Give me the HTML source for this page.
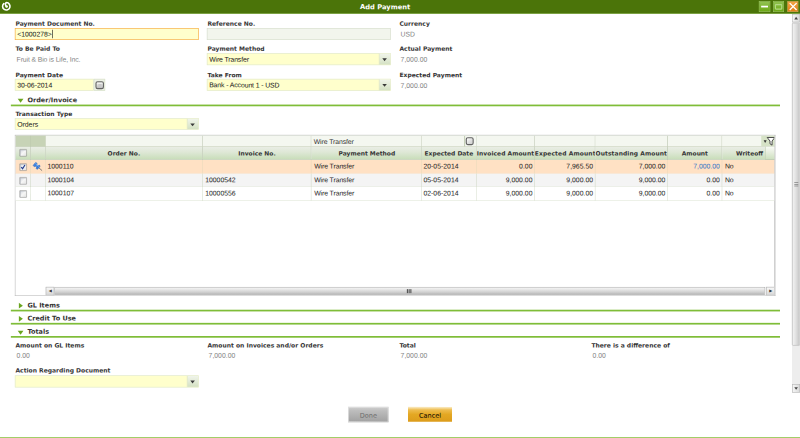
<!DOCTYPE html>
<html lang="en">
<head>
<meta charset="utf-8">
<title>Add Payment</title>
<style>
html,body{margin:0;padding:0;background:#fff;overflow:hidden;}
body{width:800px;height:438px;position:relative;}
#app{position:absolute;left:0;top:0;width:1400px;height:767px;transform:scale(0.5714286);transform-origin:0 0;background:#fff;font-family:"Liberation Sans",sans-serif;font-size:12px;color:#333;overflow:hidden;}
#app *{box-sizing:border-box;}
.abs{position:absolute;}
.titlebar{position:absolute;left:0;top:0;width:1400px;height:24.3px;background:#4b7409;border-bottom:1px solid #7aa63a;}
.title{position:absolute;left:0;top:4.9px;width:1348px;text-align:center;color:#fff;font:bold 11.75px "DejaVu Sans","Liberation Sans",sans-serif;line-height:15px;}
.lbl{position:absolute;margin-top:0.4px;font:bold 10.5px "DejaVu Sans","Liberation Sans",sans-serif;color:#333;line-height:14px;white-space:nowrap;}
.val{position:absolute;font:12px "Liberation Sans",sans-serif;color:#848484;line-height:14px;white-space:nowrap;}
.inp{position:absolute;margin-top:0.4px;height:20.2px;border:1px solid #dde5d0;background:#ffffcc;font:12px "Liberation Sans",sans-serif;color:#151515;line-height:20.6px;padding-left:3px;white-space:nowrap;}
.inp.focus{border-color:#f5a033;}
.inp.ro{background:#f2f5ed;border-color:#d5dccb;}
.sel .arrow{position:absolute;right:0;top:0;width:20px;height:18.2px;background:linear-gradient(#f0f4ea,#e4ecd9 45%,#d4e1c3);border-left:1px solid #d4dec5;}
.sel .arrow:after{content:"";position:absolute;left:5.4px;top:7.6px;border:4.6px solid transparent;border-top:5.2px solid #3a3a3a;border-bottom:0;}
.sec{position:absolute;left:19px;width:1346px;height:22.8px;border-bottom:3px solid #7fbd38;}
.sec .t{position:absolute;left:29.2px;top:4.8px;font:bold 11.4px "DejaVu Sans","Liberation Sans",sans-serif;color:#333;line-height:15px;}
.sec .tri-d{position:absolute;left:11.6px;top:10px;border:5.5px solid transparent;border-top:7.6px solid #6aa51f;border-bottom:0;}
.sec .tri-r{position:absolute;left:14px;top:7.5px;border:5px solid transparent;border-left:7px solid #6aa51f;border-right:0;}
.grid{position:absolute;left:26.4px;top:235.7px;width:1331px;height:282px;border:1px solid #b9b9b9;border-top:1.75px solid #b2b2b2;border-right:2px solid #bdbdbd;background:#fff;overflow:hidden;}
.cell{position:absolute;height:23.75px;font:12px/23.4px "Liberation Sans",sans-serif;color:#1c1c1c;padding:0 4px 0 3px;white-space:nowrap;overflow:hidden;border-right:1px solid rgba(160,180,140,.4);}
.hd{position:absolute;top:20.5px;height:22.6px;background:linear-gradient(#e9ede5,#dfe8d7 40%,#c8ddb9);border-right:1.4px solid #aab79c;border-bottom:1px solid #b9c6ab;font:bold 10.4px/22px "DejaVu Sans","Liberation Sans",sans-serif;color:#333;text-align:center;white-space:nowrap;overflow:hidden;}
.fl{position:absolute;top:0;height:20.5px;background:#f4f7f0;border-right:1.8px solid #b6c0a9;border-bottom:1.5px solid #c0cbb1;border-top:1.2px solid #cbd4bf;font:12px/20px "Liberation Sans",sans-serif;color:#333;padding-left:4px;}
.row{position:absolute;left:0;width:1329px;height:23.75px;border-bottom:1px solid #e0e6d6;}
.r{text-align:right;padding-right:3.2px !important;}
.cb{position:absolute;left:7px;top:5.6px;width:12.6px;height:13px;border:1.2px solid #8f8f8f;background:linear-gradient(135deg,#d3d7e0,#f6f6f6 50%,#e4e4e4);border-radius:1px;box-shadow:inset 1.2px 1.2px 0 rgba(170,175,185,.55);}
.btn{position:absolute;top:712.4px;height:27.2px;font:11.4px/30.8px "DejaVu Sans","Liberation Sans",sans-serif;text-align:center;}
.title,.lbl,.val,.sec .t,.cell,.btn,.tx{transform:rotate(0.05deg);}
.tx{display:block;}
.selrow .cell{border-right-color:rgba(225,215,185,.7);}
</style>
</head>
<body>
<div id="app">
  <div class="titlebar">
    <svg class="abs" style="left:2.4px;top:2.4px" width="18" height="18" viewBox="0 0 18 18"><path d="M4.6 4.2A6.5 6.5 0 1 0 9.4 2.5C7.2 3.2 6.6 6.8 9.2 9.3" fill="none" stroke="#fff" stroke-width="2.8" stroke-linecap="round"/><circle cx="9.6" cy="9.4" r="2.3" fill="#fff"/></svg>
    <div class="title">Add Payment</div>
    <div class="abs" style="left:1328.3px;top:1.8px;width:19.3px;height:19.2px;background:linear-gradient(#92c353,#6ba813);border:1px solid #a3cd6b"><div class="abs" style="left:3px;top:7.5px;width:11.5px;height:2.5px;background:#fff"></div></div>
    <div class="abs" style="left:1353px;top:1.8px;width:19.3px;height:19.2px;background:linear-gradient(#92c353,#6ba813);border:1px solid #a3cd6b"><div class="abs" style="left:2px;top:4px;width:13px;height:10px;border:2px solid #b3d985;border-radius:2px"></div></div>
    <div class="abs" style="left:1377.5px;top:1.8px;width:19.6px;height:19.2px;background:linear-gradient(#f3a548,#e27d12);border:1px solid #f4b066"><svg class="abs" style="left:0;top:0" width="18" height="17" viewBox="0 0 18 17"><path d="M3 2.5l12 12M15 2.5l-12 12" stroke="#fff" stroke-width="2.3" fill="none"/></svg></div>
  </div>

  <!-- row 1 -->
  <div class="lbl" style="left:27px;top:34px">Payment Document No.</div>
  <div class="inp focus" style="left:26px;top:49px;width:322px"><span class="tx">&lt;1000278&gt;<span style="display:inline-block;width:1px;height:15px;background:#000;vertical-align:-3px"></span></span></div>
  <div class="lbl" style="left:363px;top:34px">Reference No.</div>
  <div class="inp ro" style="left:362px;top:49px;width:322px"></div>
  <div class="lbl" style="left:699px;top:34px">Currency</div>
  <div class="val" style="left:701px;top:53px">USD</div>

  <!-- row 2 -->
  <div class="lbl" style="left:27px;top:78px">To Be Paid To</div>
  <div class="val" style="left:29px;top:97px;letter-spacing:-0.2px">Fruit &amp; Bio is Life, Inc.</div>
  <div class="lbl" style="left:363px;top:78px">Payment Method</div>
  <div class="inp sel" style="left:362px;top:93px;width:322px"><span class="tx" style="letter-spacing:-0.2px">Wire Transfer</span><div class="arrow"></div></div>
  <div class="lbl" style="left:699px;top:78px">Actual Payment</div>
  <div class="val" style="left:701px;top:97px">7,000.00</div>

  <!-- row 3 -->
  <div class="lbl" style="left:27px;top:124px">Payment Date</div>
  <div class="inp" style="left:26px;top:138px;width:138px"><span class="tx">30-06-2014</span></div>
  <div class="abs" style="left:164.4px;top:138.4px;width:19.6px;height:20.2px;background:#edf2e5;border:1px solid #d4dec5"><div class="abs" style="left:1.2px;top:2.6px;width:15.4px;height:14px;border:2px solid #666;border-radius:3.8px;background:linear-gradient(#fff,#e0e0e0 40%,#bdbdbd)"><div class="abs" style="left:3px;top:3.4px;width:6.6px;height:5px;background:#c9c9c9"></div></div></div>
  <div class="lbl" style="left:363px;top:124px">Take From</div>
  <div class="inp sel" style="left:362px;top:138px;width:322px;letter-spacing:-0.17px"><span class="tx">Bank - Account 1 - USD</span><div class="arrow"></div></div>
  <div class="lbl" style="left:699px;top:124px">Expected Payment</div>
  <div class="val" style="left:701px;top:143px">7,000.00</div>

  <div class="sec" style="top:163.3px"><div class="tri-d"></div><div class="t">Order/Invoice</div></div>

  <div class="lbl" style="left:27px;top:192px">Transaction Type</div>
  <div class="inp sel" style="left:26px;top:206.9px;width:322px"><span class="tx">Orders</span><div class="arrow"></div></div>

  <div class="grid">
    <div class="fl" style="left:0;width:27px;background:#c7d3b6;border-right-color:#b5c1a4"></div>
    <div class="fl" style="left:27px;width:26px;background:#c7d3b6;border-right-color:#b5c1a4"></div>
    <div class="fl" style="left:53px;width:274.6px"></div>
    <div class="fl" style="left:327.6px;width:190.4px"></div>
    <div class="fl" style="left:518px;width:193px"><span class="tx" style="letter-spacing:-0.15px">Wire Transfer</span></div>
    <div class="fl" style="left:711px;width:96px"><div class="abs" style="left:73.6px;top:0;width:2px;height:19px;background:#c6d0b8"></div><div class="abs" style="left:77px;top:2.2px;width:14px;height:13.8px;border:2px solid #626262;border-radius:3.6px;background:linear-gradient(135deg,#fff,#e4e4e4 45%,#cdcdcd)"></div></div>
    <div class="fl" style="left:807px;width:102px"></div>
    <div class="fl" style="left:909px;width:106px"></div>
    <div class="fl" style="left:1015px;width:126.6px"></div>
    <div class="fl" style="left:1141.6px;width:95px"></div>
    <div class="fl" style="left:1236.6px;width:92.4px"><svg class="abs" style="right:-2px;top:-0.6px" width="25" height="19" viewBox="0 0 25 19"><rect width="25" height="19" fill="#d6e2c6"/><path d="M4.4 8.6h5.2l-2.6 4.6z" fill="#333"/><path d="M10.6 3.6h13.4l-4.9 6.2v7.2l-3.6-2.4v-4.8z" fill="#fff" stroke="#333" stroke-width="1.5" stroke-linejoin="round"/></svg></div>

    <div class="hd" style="left:0;width:27px"><div class="cb" style="top:4px"></div></div>
    <div class="hd" style="left:27px;width:26px"></div>
    <div class="hd" style="left:53px;width:274.6px"><span class="tx">Order No.</span></div>
    <div class="hd" style="left:327.6px;width:190.4px"><span class="tx">Invoice No.</span></div>
    <div class="hd" style="left:518px;width:193px;padding-left:2px"><span class="tx">Payment Method</span></div>
    <div class="hd" style="left:711px;width:96px"><span class="tx">Expected Date</span></div>
    <div class="hd" style="left:807px;width:102px"><span class="tx" style="letter-spacing:.1px">Invoiced Amount</span></div>
    <div class="hd" style="left:909px;width:106px"><span class="tx" style="letter-spacing:.2px">Expected Amount</span></div>
    <div class="hd" style="left:1015px;width:126.6px"><span class="tx" style="letter-spacing:.17px">Outstanding Amount</span></div>
    <div class="hd" style="left:1141.6px;width:95px"><span class="tx">Amount</span></div>
    <div class="hd" style="left:1236.6px;width:92.4px;border-right:0;padding-left:3px"><span class="tx">Writeoff</span></div>
    <div class="hd" style="left:1312px;width:17px;border-right:0;border-left:1px solid #c3cfb4;background:linear-gradient(#f8faf5,#e6eedd 45%,#cde0be)"></div>

    <div class="row selrow" style="top:43.1px;background:#ffe1c4;border-bottom-color:#f7e0c6">
      <div class="cell" style="left:0;width:27px"><div class="cb"><svg style="position:absolute;left:0;top:0" width="11" height="11" viewBox="0 0 11 11"><path d="M2.2 5.6l2.3 2.7L8.6 1.8" stroke="#27408f" stroke-width="2.2" fill="none"/></svg></div></div>
      <div class="cell" style="left:27px;width:26px;padding:0"><svg style="position:absolute;left:0;top:0" width="26" height="24" viewBox="0 0 26 24"><g transform="translate(6.8 7.4) rotate(41) scale(.92)"><path d="M10 0L18.5 0" stroke="#6b6b6b" stroke-width="1.5"/><rect x="-1" y="-4.2" width="4" height="8.4" rx="1.6" fill="#3f86e2" stroke="#2a5fb8" stroke-width=".8"/><rect x="2.6" y="-2.3" width="5" height="4.6" fill="#4b93ea" stroke="#2a5fb8" stroke-width=".6"/><rect x="7" y="-4.6" width="3.4" height="9.2" rx="1.5" fill="#3a7ddb" stroke="#2a5fb8" stroke-width=".8"/><path d="M0 -2.4L8.6 -1.6" stroke="#a9cdf7" stroke-width="1"/></g></svg></div>
      <div class="cell" style="left:53px;width:274.6px">1000110</div>
      <div class="cell" style="left:327.6px;width:190.4px"></div>
      <div class="cell" style="left:518px;width:193px;padding-left:4.8px"><span style="letter-spacing:-0.15px">Wire Transfer</span></div>
      <div class="cell" style="left:711px;width:96px">20-05-2014</div>
      <div class="cell r" style="left:807px;width:102px">0.00</div>
      <div class="cell r" style="left:909px;width:106px">7,965.50</div>
      <div class="cell r" style="left:1015px;width:126.6px">7,000.00</div>
      <div class="cell r" style="left:1141.6px;width:95px;color:#3273c6">7,000.00</div>
      <div class="cell" style="left:1236.6px;width:92.4px;border-right:0;padding-left:4.6px">No</div>
    </div>
    <div class="row" style="top:66.85px;background:#f4f4f4">
      <div class="cell" style="left:0;width:27px"><div class="cb"></div></div>
      <div class="cell" style="left:27px;width:26px"></div>
      <div class="cell" style="left:53px;width:274.6px">1000104</div>
      <div class="cell" style="left:327.6px;width:190.4px;padding-left:4px">10000542</div>
      <div class="cell" style="left:518px;width:193px;padding-left:4.8px"><span style="letter-spacing:-0.15px">Wire Transfer</span></div>
      <div class="cell" style="left:711px;width:96px">05-05-2014</div>
      <div class="cell r" style="left:807px;width:102px">9,000.00</div>
      <div class="cell r" style="left:909px;width:106px">9,000.00</div>
      <div class="cell r" style="left:1015px;width:126.6px">9,000.00</div>
      <div class="cell r" style="left:1141.6px;width:95px">0.00</div>
      <div class="cell" style="left:1236.6px;width:92.4px;border-right:0;padding-left:4.6px">No</div>
    </div>
    <div class="row" style="top:90.6px;background:#fff">
      <div class="cell" style="left:0;width:27px"><div class="cb"></div></div>
      <div class="cell" style="left:27px;width:26px"></div>
      <div class="cell" style="left:53px;width:274.6px">1000107</div>
      <div class="cell" style="left:327.6px;width:190.4px;padding-left:4px">10000556</div>
      <div class="cell" style="left:518px;width:193px;padding-left:4.8px"><span style="letter-spacing:-0.15px">Wire Transfer</span></div>
      <div class="cell" style="left:711px;width:96px">02-06-2014</div>
      <div class="cell r" style="left:807px;width:102px">9,000.00</div>
      <div class="cell r" style="left:909px;width:106px">9,000.00</div>
      <div class="cell r" style="left:1015px;width:126.6px">9,000.00</div>
      <div class="cell r" style="left:1141.6px;width:95px">0.00</div>
      <div class="cell" style="left:1236.6px;width:92.4px;border-right:0;padding-left:4.6px">No</div>
    </div>
    <!-- horizontal scrollbar -->
    <div class="abs" style="left:53px;top:265px;width:1276px;height:15px;background:#eee">
      <div class="abs" style="left:0;top:0;width:15px;height:15px;background:linear-gradient(#fafafa,#d6d6d6);border:1px solid #b0b0b0;font:7px/13px 'DejaVu Sans',sans-serif;text-align:center;color:#333">◀</div>
      <div class="abs" style="left:15px;top:0;width:1244px;height:15px;background:linear-gradient(#f6f6f6,#e3e3e3 35%,#cfcfcf 65%,#b1b1b1);border:1px solid #a4a4a4;border-top-color:#999;border-radius:2px"><div class="abs" style="left:616px;top:3px;width:1.2px;height:7px;background:#555"></div><div class="abs" style="left:619px;top:3px;width:1.2px;height:7px;background:#555"></div><div class="abs" style="left:622px;top:3px;width:1.2px;height:7px;background:#555"></div></div>
      <div class="abs" style="right:0;top:0;width:15px;height:15px;background:linear-gradient(#fafafa,#d6d6d6);border:1px solid #b0b0b0;font:7px/13px 'DejaVu Sans',sans-serif;text-align:center;color:#333">▶</div>
    </div>
  </div>

  <div class="sec" style="top:522.7px"><div class="tri-r"></div><div class="t">GL Items</div></div>
  <div class="sec" style="top:545.7px"><div class="tri-r"></div><div class="t">Credit To Use</div></div>
  <div class="sec" style="top:568.7px"><div class="tri-d"></div><div class="t">Totals</div></div>

  <div class="lbl" style="left:27px;top:597px">Amount on GL Items</div>
  <div class="val" style="left:29px;top:615px">0.00</div>
  <div class="lbl" style="left:363px;top:597px">Amount on Invoices and/or Orders</div>
  <div class="val" style="left:365px;top:615px">7,000.00</div>
  <div class="lbl" style="left:699px;top:597px">Total</div>
  <div class="val" style="left:701px;top:615px">7,000.00</div>
  <div class="lbl" style="left:1035px;top:597px">There is a difference of</div>
  <div class="val" style="left:1037px;top:615px">0.00</div>

  <div class="lbl" style="left:27px;top:641px">Action Regarding Document</div>
  <div class="inp sel" style="left:26px;top:657px;width:322px"><div class="arrow"></div></div>

  <div class="btn" style="left:609.4px;width:71.2px;background:linear-gradient(#cfcfcf,#bdbdbd 25%,#a0a0a0);box-shadow:inset 0 0 0 1.6px rgba(228,228,228,.8);color:#6c6c6c">Done</div>
  <div class="btn" style="left:713.6px;width:77.4px;height:26.4px;background:linear-gradient(#fbeecb,#eebd50 20%,#e4a823 50%,#dc9c1b);color:#000">Cancel</div>

  <!-- vertical scrollbar -->
  <div class="abs" style="left:1385.5px;top:25px;width:14.5px;height:662px;background:#ededed">
    <div class="abs" style="left:0;top:0;width:14.5px;height:14px;background:linear-gradient(90deg,#f6f6f6,#dadada);border:1px solid #b9b9b9"><svg class="abs" style="left:0;top:0" width="12" height="12" viewBox="0 0 12 12"><path d="M6.2 3.5l3.2 4.5h-6.4z" fill="#444"/></svg></div>
    <div class="abs" style="left:0;top:14.5px;width:14.5px;height:565px;background:linear-gradient(90deg,#f3f3f3,#dedede 55%,#c6c6c6);border:1px solid #b3b3b3;border-radius:2px"><div class="abs" style="left:3px;top:278px;width:7px;height:7px;border-top:1px solid #666;border-bottom:1px solid #666"><div class="abs" style="left:0;top:2px;width:7px;height:1px;background:#666"></div></div></div>
    <div class="abs" style="left:0;bottom:0;width:14.5px;height:15px;background:linear-gradient(90deg,#f6f6f6,#dadada);border:1px solid #b3b3b3"><svg class="abs" style="left:0;top:0" width="12" height="13" viewBox="0 0 12 13"><path d="M6.2 9l3.2-4.5h-6.4z" fill="#444"/></svg></div>
  </div>

  <div class="abs" style="left:0;top:764.7px;width:1400px;height:3px;background:#92c64f"></div>
</div>
</body>
</html>
